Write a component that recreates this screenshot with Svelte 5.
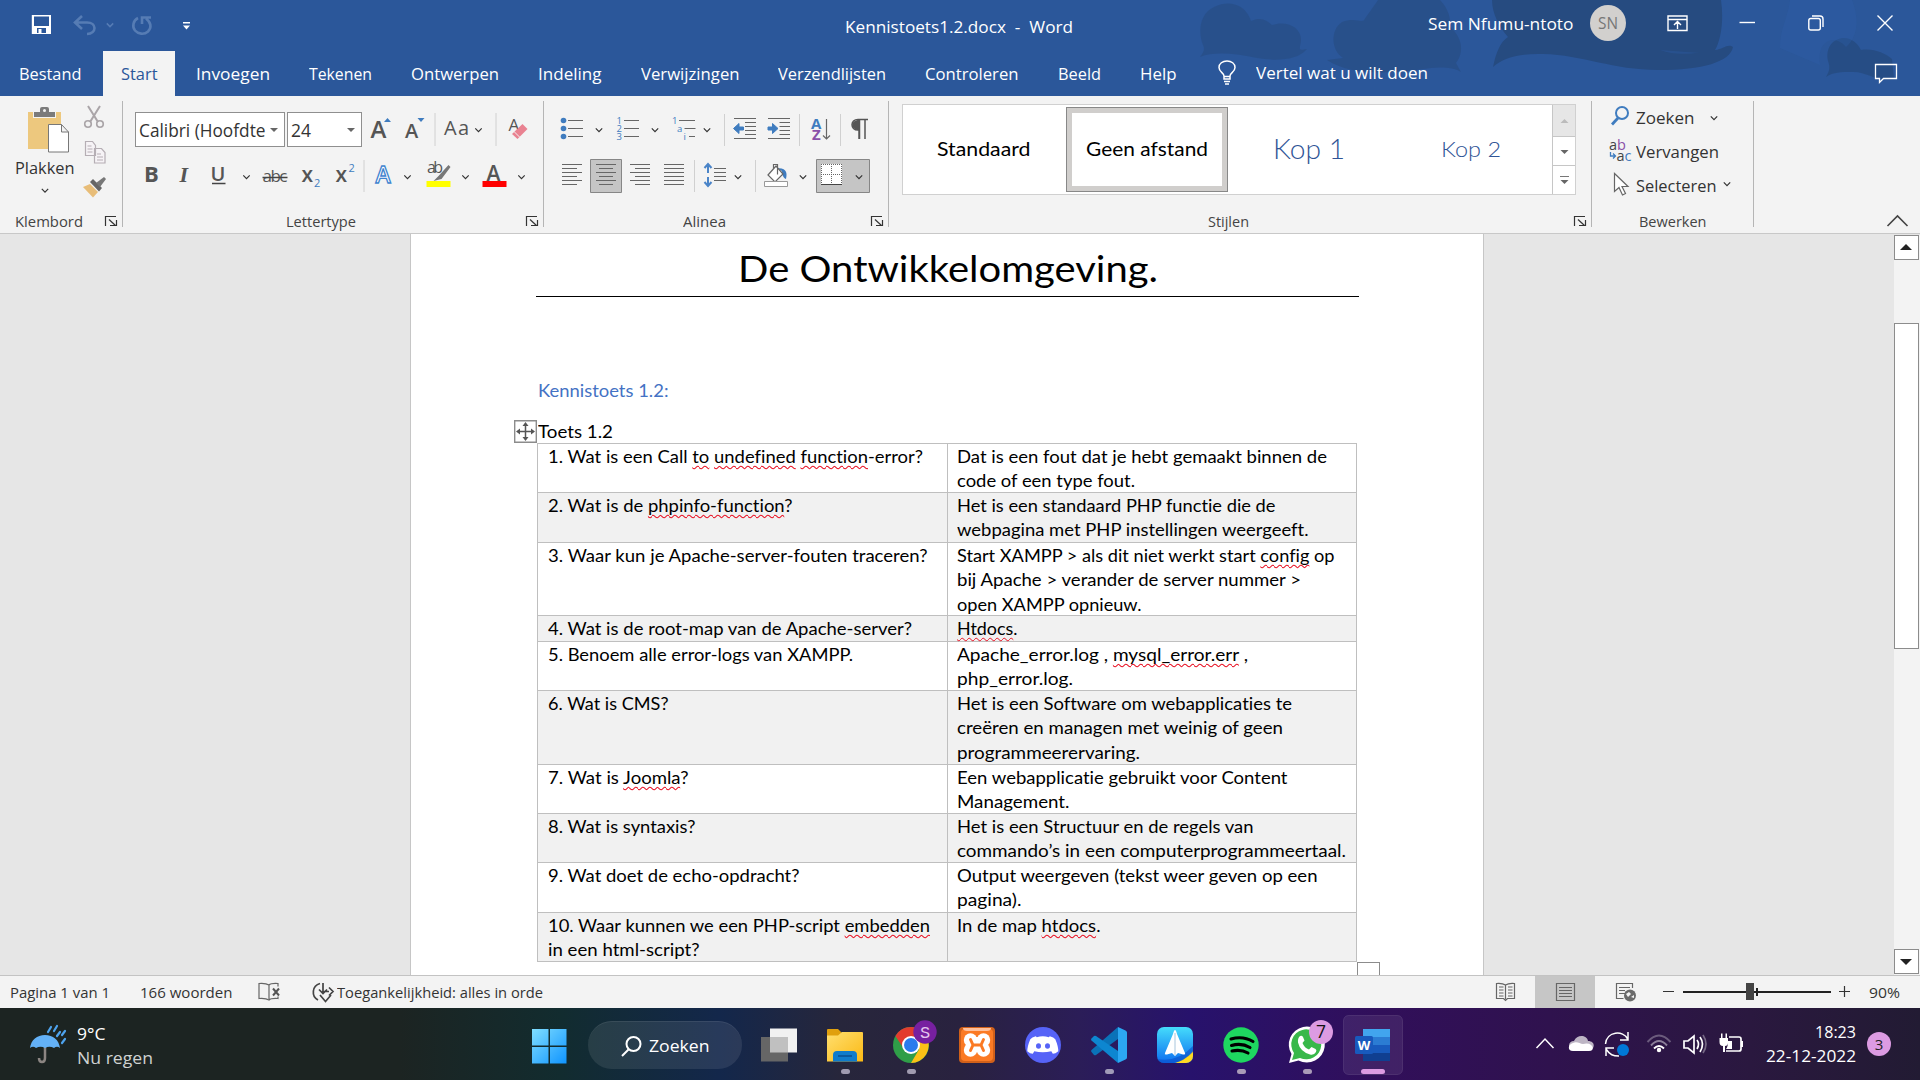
<script>
  // Scales a run of text horizontally so that it takes exactly `width` pixels.
  function fit(node, width) {
    const natural = node.getBoundingClientRect().width;
    node.style.transform = `scaleX(${width / natural})`;
    node.style.marginRight = `${width - natural}px`;
  }

  const caret = (x, y) => `M${x - 3.2} ${y - 1.6}l3.2 3.2 3.2-3.2`;
  const lines = (x1, x2, ys) => ys.map((y) => `M${x1} ${y}H${x2}`).join('');
  const six = [164.5, 168.5, 172.5, 176.5, 180.5, 184.5];
  const odd = [164.5, 172.5, 180.5];
  const even = [168.5, 176.5, 184.5];

  const tabs = [
    ['Bestand', 62.5], ['Start', 36.5], ['Invoegen', 74], ['Tekenen', 63], ['Ontwerpen', 88],
    ['Indeling', 63.5], ['Verwijzingen', 98.5], ['Verzendlijsten', 108], ['Controleren', 93.5],
    ['Beeld', 43], ['Help', 36.5]
  ];

  // Each line: [width, ...segments]; a segment wrapped in an array is a spelling error.
  const rows = [
    [49, [[375, '1. Wat is een Call ', ['to'], ' ', ['undefined'], ' ', ['function'], '-error?']],
      [[370, 'Dat is een fout dat je hebt gemaakt binnen de'], [178, 'code of een type fout.']]],
    [50, [[244.5, '2. Wat is de ', ['phpinfo-function'], '?']],
      [[318.5, 'Het is een standaard PHP functie die de'], [351.5, 'webpagina met PHP instellingen weergeeft.']]],
    [73, [[379.5, '3. Waar kun je Apache-server-fouten traceren?']],
      [[377.5, 'Start XAMPP > als dit niet werkt start ', ['config'], ' op'], [344, 'bij Apache > verander de server nummer >'], [184.5, 'open XAMPP opnieuw.']]],
    [26, [[364, '4. Wat is de root-map van de Apache-server?']], [[60.5, ['Htdocs'], '.']]],
    [49, [[305, '5. Benoem alle error-logs van XAMPP.']],
      [[291, 'Apache_error.log , ', ['mysql_error.err'], ' ,'], [116, 'php_error.log.']]],
    [74, [[120.5, '6. Wat is CMS?']],
      [[335, 'Het is een Software om webapplicaties te'], [326, 'creëren en managen met weinig of geen'], [183, 'programmeerervaring.']]],
    [49, [[140.5, '7. Wat is ', ['Joomla'], '?']],
      [[330.5, 'Een webapplicatie gebruikt voor Content'], [112.5, 'Management.']]],
    [49, [[147.5, '8. Wat is syntaxis?']],
      [[296.5, 'Het is een Structuur en de regels van'], [389, 'commando’s in een computerprogrammeertaal.']]],
    [50, [[251.5, '9. Wat doet de echo-opdracht?']],
      [[360.5, 'Output weergeven (tekst weer geven op een'], [64.5, 'pagina).']]],
    [49, [[382, '10. Waar kunnen we een PHP-script ', ['embedden']], [151.5, 'in een html-script?']],
      [[143.5, 'In de map ', ['htdocs'], '.']]]
  ];
</script>

{#snippet textLines(list)}
  <div class="cell">
    {#each list as [w, ...segs]}
      <div class="line"><span class="fit" use:fit={w}>{#each segs as s}{#if Array.isArray(s)}<span class="err">{s[0]}</span>{:else}{s}{/if}{/each}</span></div>
    {/each}
  </div>
{/snippet}

{#snippet groupLabel(text, w, launcher)}
  <div class="label">
    <span class="name"><span class="fit" use:fit={w}>{text}</span></span>
    {#if launcher}
      <svg width="24" height="20" viewBox="0 0 24 20"><path d="M7.500 15V5.500H18M18.500 9V14.500H12" class="ln dk" /><path d="M11 8.500l6.500 6" class="ln dk" /></svg>
    {/if}
  </div>
{/snippet}

<div class="screen">
  <header>
    <svg class="decor" width="780" height="96" viewBox="1140 0 780 96">
      <g fill="#264b80">
        <path opacity=".55" d="M1200 57c4-5 5-8 3-12-5-12-4-31 11-38 16-8 32-2 37 14 10-5 17 0 21 4 14-5 30 2 29 16-1 8-4 10 6 8-10 12-32 12-50 9-20-4-42-7-57-1z" />
        <path opacity=".6" d="M1327 60l16-2c-12-8-13-28-1-36 12-5 20 1 22-2 10-14 14-20 14-20h62c8 8 12 20 9 26 17 14 13 30 7 37l5 9c-8-5-20-5-30-4-40 6-80 8-104-8z" />
        <path d="M1492 0c0 14 8 28 16 37-8 5-12 16-15 30 9-8 24-14 50-13 40 1 70 16 115 16 45 0 72-8 75-23-5-4-10 2-18 3 6-10 9-30 6-50z" />
        <path opacity=".8" d="M1826 77c4-7 4-10 2-16-3-14 6-23 16-23 8 0 14 6 17 12 12-2 24 3 31 9l2 20c-18 3-28-8-42-7-12 0-18 0-26 5z" />
      </g>
      <path d="M1780 48c0-20 8-30 10-48h62c8 20 5 38-6 47-12-14-30-6-26 18M1660 50c15 6 30 3 40 3" fill="#2f5fa8" opacity=".35" />
    </svg>
    <div class="titlebar">
      <svg width="220" height="48" viewBox="0 0 220 48">
        <path d="M31.800 15h19.200v19h-19.200z" fill="#fff" /><path d="M34 16.500h15v9.500h-15zM37 28h9v5h-9z" fill="#2b579a" /><path d="M38.500 29h3v4h-3z" fill="#fff" />
        <g fill="none" stroke="#567cb4" stroke-width="2.600"><path d="M82 16l-7 6.500 7 6.500M75 22.500h12c10 0 10 11 0 11.500" /><path d="M146 18.500c5 4 6 9 2 13-4 3.500-10 2.500-13-1-3-4-2-10 3-12.500M142 24V17.500h9" /></g>
        <path d={caret(110, 25)} fill="none" stroke="#567cb4" stroke-width="1.500" />
        <path d="M183 22h7v1.500h-7zM183 25.500h7l-3.500 4z" fill="#fff" />
      </svg>
      <span class="doc"><span class="fit pre" use:fit={228}>Kennistoets1.2.docx  -  Word</span></span>
      <span class="user"><span class="fit" use:fit={145.5}>Sem Nfumu-ntoto</span></span>
      <span class="avatar"><span class="fit" use:fit={20}>SN</span></span>
      <svg width="280" height="48" viewBox="1640 0 280 48" fill="none" stroke="#fff" stroke-width="1.400">
        <path d="M1668 16h19v14.500h-19zM1668 19.500h19M1677.500 29v-7M1674 25l3.500-3.500 3.500 3.500" />
        <path d="M1739.500 22.500h15.500" /><rect x="1808.800" y="18.500" width="11.500" height="11.500" rx="2" /><path d="M1812 16h8c2 0 3 1 3 3v8" />
        <path d="M1877.500 15.500l15 15M1892.500 15.500l-15 15" />
      </svg>
    </div>
    <nav>
      {#each tabs as [name, w]}
        <span class="tab" class:active={name === 'Start'}><span class="fit" use:fit={w}>{name}</span></span>
      {/each}
      <svg class="bulb" width="24" height="45" viewBox="1216 51 24 45" fill="none" stroke="#fff" stroke-width="1.500"><path d="M1225 79v-3c0-3-5-4-5-8.500 0-4 3.500-6.500 8-6.500s8 2.500 8 6.500c0 4.500-5 5.500-5 8.500v3zM1225 81.500h6M1226 84h4M1225 76.500h6" /></svg>
      <span class="tell"><span class="fit" use:fit={172}>Vertel wat u wilt doen</span></span>
      <svg class="comment" width="24" height="45" viewBox="1874 51 24 45" fill="none" stroke="#fff" stroke-width="1.300"><path d="M1875.500 64.500h21v14h-13l-4 4v-4h-4z" /></svg>
    </nav>
  </header>

  <section class="ribbon">
    <div class="group g1">
      <div class="body clip">
        <div class="paste">
          <svg width="84" height="54" viewBox="0 101 84 54"><path d="M28 112h33v37H28z" fill="#edc87e" /><path d="M33 111h23v7H33z" fill="#f3f3f3" /><path d="M34 112h6v-3q0-2 2-2h5q2 0 2 2v3h6v5H34z" fill="#7b7b7b" /><circle cx="44.500" cy="110.500" r="1.500" fill="#f3f3f3" /><path d="M48.500 124.500h13l7 7.500v20h-20zM61.500 124.500v7.500h7" fill="#fff" stroke="#777" /></svg>
          <span class="big"><span class="fit" use:fit={59.5}>Plakken</span></span>
          <svg width="84" height="32" viewBox="0 179 84 32"><path d={caret(45, 190.500)} class="ln dk" /></svg>
        </div>
        <div class="minis">
          <svg width="34" height="34" viewBox="80 101 34 34" fill="none" stroke="#aaa5a8" stroke-width="2"><path d="M88 106l10 16M100 106l-10 16" /><circle cx="88" cy="124" r="3.300" stroke-width="1.600" /><circle cx="100" cy="124" r="3.300" stroke-width="1.600" /></svg>
          <svg width="34" height="34" viewBox="80 135 34 34" fill="#f6f3f6" stroke="#b5aeb4" stroke-width="1.200"><path d="M85.500 141.500h7l3 4v10h-10zM94.500 148.500h7l3.500 4v10.500h-10.500z" /><path d="M87.500 146h4M87.500 149h5M87.500 152h5M97 154h4M97 157h6M97 160h6" /></svg>
          <svg width="34" height="42" viewBox="80 169 34 42"><path d="M83 187l7-3 8 8-5 5.500z" fill="#e8bd78" /><path d="M90 182l3-3 9 9-3 3.500z" fill="#666" /><path d="M96 183l8-6 2 2-6 8z" fill="#777" /></svg>
        </div>
      </div>
      {@render groupLabel('Klembord', 68, true)}
    </div>

    <div class="group g2">
      <div class="row r1 fontrow">
        <span class="combo wide"><span class="fit" use:fit={126.5}>Calibri (Hoofdte</span><i></i></span>
        <span class="combo"><span class="fit" use:fit={20}>24</span><i></i></span>
        <svg width="173" height="52" viewBox="361.500 101 173 52">
          <g class="glyph"><text x="370" y="138" font-size="24" font-weight="600" textLength="17">A</text><text x="404.500" y="138" font-size="20" font-weight="600" textLength="14">A</text><text x="443.500" y="135" font-size="20" textLength="25">Aa</text><text x="508" y="131" font-size="17" textLength="11">A</text></g>
          <path d="M383.500 122h7l-3.500-4zM417 118h7l-3.500 4z" fill="#3f7cbf" />
          <path d="M434.500 113v33M495.500 113v33" class="sep" /><path d={caret(478, 130)} class="ln dk" />
          <path d="M511.500 134l5.500 5 10-10-5-5z" fill="#e98291" /><path d="M513.500 131.500l5.500 5.500" stroke="#f3f3f3" />
        </svg>
      </div>
      <div class="row r2">
        <svg width="420" height="58" viewBox="122.500 153 420 58">
          <g class="glyph"><text x="143.500" y="182" font-size="22" font-weight="700" textLength="14">B</text><text x="179" y="182" font-size="22" class="serif" font-weight="600">I</text><text x="210" y="181" font-size="20" font-weight="600" textLength="16">U</text><text x="262" y="182" font-size="17" textLength="25">abc</text><text x="301" y="181.500" font-size="21" font-weight="600">x</text><text x="335" y="181.500" font-size="21" font-weight="600">x</text><text x="426.500" y="173" font-size="16" textLength="16">ab</text><text x="486" y="181" font-size="21" font-weight="600" textLength="15">A</text></g>
          <path d="M211.500 183.500h13.500M262 177.500h25" stroke="#444" stroke-width="1.300" />
          <g fill="#3f7cbf" class="sans"><text x="313.500" y="187" font-size="11">2</text><text x="348" y="172" font-size="11">2</text></g>
          <text x="375" y="183" font-size="23" font-weight="600" class="sans" fill="#fff" stroke="#3f84cf" stroke-width="1.300">A</text>
          <path d="M363.500 160v32" class="sep" />
          <path d={[caret(246, 177), caret(407, 177), caret(465, 177), caret(521, 177)].join('')} class="ln dk" />
          <path d="M448 165l-10 11-5 5 8-2 9-12z" fill="#777" /><path d="M426 181h24v6h-24z" fill="#ff0" /><path d="M482 181h24v6h-24z" fill="red" />
        </svg>
      </div>
      {@render groupLabel('Lettertype', 70, true)}
    </div>

    <div class="group g3">
      <div class="row r1">
        <svg width="344" height="52" viewBox="544 101 344 52">
          <g fill="#3f7cbf"><circle cx="563.500" cy="120.500" r="2.800" /><circle cx="563.500" cy="128.500" r="2.800" /><circle cx="563.500" cy="136.500" r="2.800" />
            <g font-size="9.500" class="sans"><text x="616.500" y="124">1</text><text x="616.500" y="132">2</text><text x="616.500" y="140">3</text><text x="672" y="124">1</text><text x="677" y="132">a</text><text x="683.500" y="140">i</text></g>
            <path d="M733.500 128.500l5.500-5v3.500h4.500v3h-4.500v3.500zM778 128.500l-5.500-5v3.500h-4.500v3h4.500v3.500z" stroke="#3f7cbf" />
          </g>
          <path d={lines(568, 583, [120.5, 128.5, 136.5]) + lines(624, 639, [120.5, 128.5, 136.5]) + 'M679 120.500h16M684.500 128.500h11M689 136.500h6' + lines(734, 756, [118.5, 138.5]) + lines(745, 756, [122.5, 126.5, 130.5, 134.5]) + lines(768, 790, [118.5, 138.5]) + lines(779.5, 790, [122.5, 126.5, 130.5, 134.5])} class="ln" />
          <path d={[caret(599, 130), caret(655, 130), caret(707, 130)].join('')} class="ln dk" />
          <path d="M724.500 114v32M799.500 114v32M840.500 114v32" class="sep" />
          <g class="sans" font-weight="700" font-size="15"><text x="811" y="129" fill="#3f7cbf">A</text><text x="812" y="140" fill="#8a50a8">Z</text></g>
          <path d="M826.500 119v20M823 135.500l3.500 3.500 3.500-3.500" class="ln" stroke-width="1.500" />
          <path d="M868 119.500h-10c-8 0-8 10.500 0 10.500h1v9M865 119.500v19.500M859.500 119.500v19.500" fill="none" stroke="#555" stroke-width="1.500" /><path d="M859 120v10c-9 0-9-10 0-10z" fill="#555" />
        </svg>
      </div>
      <div class="row r2">
        <svg width="344" height="58" viewBox="544 153 344 58">
          <path d="M590.500 159.500h31v33h-31zM816.500 159.500h53v33h-53z" fill="#c5c5c5" stroke="#868686" />
          <path d={lines(562, 582, odd) + lines(562, 577, even) + lines(596, 616, odd) + lines(599, 613, even) + lines(630, 650, odd) + lines(635, 650, even) + lines(664, 684, six) + lines(714, 726, [168.5, 172.5, 176.5, 180.5])} class="ln" />
          <path d="M694.500 160v32M755.500 160v32" class="sep" />
          <path d="M704.500 168l3.500-4 3.500 4M708 165v8M704.500 182l3.500 4 3.500-4M708 177v8" fill="none" stroke="#4a84c8" stroke-width="2" />
          <path d="M776 168c9 0 12 3 10 11-3-1-4-5-4-8z" fill="#3f7cbf" /><path d="M768 175l8-9 7 8-8 8zM773.500 169v-4.500h4v10" fill="#fff" stroke="#666" stroke-width="1.200" /><path d="M764.500 181.500h23v5h-23z" fill="#fff" stroke="#999" />
          <path d="M821 164h21v21h-21z" fill="#fff" /><path d="M821 164.500h21M821 174.500h21M821.500 164v20M831.500 164v20M841.500 164v20" stroke="#666" stroke-dasharray="1 1" /><path d="M821 184.500h21" stroke="#444" />
          <path d={[caret(738, 177), caret(803, 177), caret(859, 177)].join('')} class="ln dk" />
        </svg>
      </div>
      {@render groupLabel('Alinea', 43, true)}
    </div>

    <div class="group g4">
      <div class="body">
        <div class="gallery">
          <span class="style"><span class="fit" use:fit={93.5}>Standaard</span></span>
          <span class="style sel"><span class="fit" use:fit={122}>Geen afstand</span></span>
          <span class="style k1"><span class="fit" use:fit={72}>Kop 1</span></span>
          <span class="style k2"><span class="fit" use:fit={60}>Kop 2</span></span>
          <span class="spin"><b class="off"><svg width="22" height="30" viewBox="0 0 22 30"><path d="M7.500 18h8l-4-4z" fill="#bbb" /></svg></b><b><svg width="22" height="28" viewBox="0 0 22 28"><path d="M7.500 13h8l-4 4z" fill="#666" /></svg></b><b><svg width="22" height="28" viewBox="0 0 22 28"><path d="M7 10.500h9" stroke="#777" /><path d="M7.500 14h8l-4 4z" fill="#666" /></svg></b></span>
        </div>
      </div>
      {@render groupLabel('Stijlen', 41, true)}
    </div>

    <div class="group g5">
      <div class="body edit">
        <div><svg width="44" height="34" viewBox="1592 101 44 34"><circle cx="1622" cy="113" r="6" fill="none" stroke="#3f7cbf" stroke-width="2" /><path d="M1618 118l-6 6.500" stroke="#3f7cbf" stroke-width="2.800" /></svg><span class="fit" use:fit={58.5}>Zoeken</span><svg class="c1" width="20" height="34" viewBox="0 0 20 34"><path d={caret(10, 17)} class="ln dk" /></svg></div>
        <div><svg width="44" height="34" viewBox="1592 135 44 34"><g class="sans" font-size="14.500" fill="#444"><text x="1609" y="149.500">a<tspan fill="#8a50a8">b</tspan></text><text x="1616.500" y="160.500">a<tspan fill="#3f7cbf">c</tspan></text></g><path d="M1610.500 152v4h5M1613 153.500l2.500 2.500-2.500 2.500" fill="none" stroke="#3f7cbf" stroke-width="1.300" /></svg><span class="fit" use:fit={83}>Vervangen</span></div>
        <div><svg width="44" height="34" viewBox="1592 169 44 34"><path d="M1614.500 173.500v18l4.500-4 3.500 7.500 3-1.500-3.500-7h6z" fill="#fff" stroke="#666" stroke-width="1.200" /></svg><span class="fit" use:fit={80.5}>Selecteren</span><svg class="c2" width="20" height="34" viewBox="0 0 20 34"><path d={caret(10, 15)} class="ln dk" /></svg></div>
      </div>
      {@render groupLabel('Bewerken', 67.5, false)}
    </div>
    <svg class="collapse" width="30" height="20" viewBox="1882 211 30 20"><path d="M1887.500 226l10-10 10 10" fill="none" stroke="#444" stroke-width="1.600" /></svg>
  </section>

  <main>
    <article>
      <h1><span class="fit" use:fit={420}>De Ontwikkelomgeving.</span></h1>
      <h2><span class="fit" use:fit={130.5}>Kennistoets 1.2:</span></h2>
      <p><span class="fit" use:fit={75}>Toets 1.2</span>
        <svg class="move" width="23" height="23" viewBox="0 0 23 23"><path d="M.7.700h21.600v21.600H.7z" fill="#fff" stroke="#8c8c8c" stroke-width="1.400" /><path d="M11.500 4v15M4 11.500h15" stroke="#555" stroke-width="1.500" /><path d="M11.500 2l-3 4h6zM11.500 21l-3-4h6zM2 11.500l4-3v6zM21 11.500l-4-3v6z" fill="#555" /></svg>
      </p>
      <div class="table">
        {#each rows as [h, q, a], i}
          <div class="trow" class:alt={i % 2} style:height="{h}px">
            {@render textLines(q)}
            {@render textLines(a)}
          </div>
        {/each}
      </div>
      <span class="resize"></span>
    </article>
    <aside>
      <b><svg width="25" height="24" viewBox="0 0 25 24"><path d="M6 14h12l-6-6z" fill="#222" /></svg></b>
      <span class="thumb"></span>
      <b><svg width="25" height="24" viewBox="0 0 25 24"><path d="M6 9h12l-6 6z" fill="#222" /></svg></b>
    </aside>
  </main>

  <footer>
    <span class="st s1"><span class="fit" use:fit={100}>Pagina 1 van 1</span></span>
    <span class="st s2"><span class="fit" use:fit={92.5}>166 woorden</span></span>
    <svg width="105" height="32" viewBox="232 976 105 32"><path d="M269 999V985q-3-2-10-1.500v15q7-.5 10 1.500q2-2 9-1.500v-2M269 985q2-2 9-1.500v3" fill="none" stroke="#666" stroke-width="1.200" /><path d="M273 988.500l6 7M279 988.500l-6 7" stroke="#555" stroke-width="2" />
      <path d="M320 983.500c-8 2-9 13-2 16.500M323 983v10M319 989.500l4 4 4-4M324 991.500h5M329 987.500l4 4-4 4M320 995l5.500 6.500 5.500-6.500" fill="none" stroke="#444" stroke-width="1.700" /></svg>
    <span class="st"><span class="fit" use:fit={206}>Toegankelijkheid: alles in orde</span></span>
    <svg class="views" width="385" height="32" viewBox="1480 976 385 32">
      <path d="M1535 976h60v32h-60z" fill="#c6c6c6" />
      <g fill="none" stroke="#666" stroke-width="1.200"><path d="M1505.500 985q-3-2-9-1.500v15h7l2 2 2-2h7v-15q-6-.5-9 1.500v14" /><path d={lines(1499, 1503.5, [987, 990, 993, 996]) + lines(1508, 1512.5, [987, 990, 993, 996])} /><path d={'M1556.500 983.500h18v17h-18z' + lines(1559, 1572, [987.5, 990.5, 993.5, 996.5])} /><path d={'M1632.500 988v-4.500h-16v15h7' + lines(1619, 1630, [987.5]) + lines(1619, 1625, [990.5, 993.5])} /></g>
      <circle cx="1630" cy="995.500" r="6" fill="#6b6b6b" /><path d="M1626 994l3-2 2 2-3 3zM1631 997l3-2v3z" fill="#f3f3f3" />
      <path d="M1663 991.500h11M1839 991.500h11M1844.500 986v11" stroke="#333" stroke-width="1.200" /><path d="M1683 991h148v2h-148z" fill="#222" /><path d="M1746 983h8v17h-8z" fill="#444" /><path d="M1756 988h2v8h-2z" fill="#222" />
    </svg>
    <span class="st pct"><span class="fit" use:fit={31}>90%</span></span>
  </footer>

  <div class="taskbar">
    <svg width="77" height="72" viewBox="0 1008 77 72"><path d="M45 1045v13q0 4-3 4t-3-4" fill="none" stroke="#8b8582" stroke-width="2.500" /><path d="M30 1048c1-8 7-13 15-13s14 5 15 13q-3-2.500-6 0-4.500-2.500-9 0-4.500-2.500-9 0-3-2.500-6 0z" fill="#63b1f7" /><path d="M48 1032l3-5M54 1031l3-5M57 1036l3-4M62 1035l3-4M62 1043l3-4" stroke="#4ea3ee" stroke-width="2.200" stroke-linecap="round" /></svg>
    <div class="weather"><span><span class="fit" use:fit={28.500}>9°C</span></span><span class="sub"><span class="fit" use:fit={76}>Nu regen</span></span></div>
    <svg class="win" width="36" height="72" viewBox="532 1008 36 72"><defs><linearGradient id="w" x1="0" y1="0" x2="1" y2="1"><stop offset="0" stop-color="#80deff" /><stop offset="1" stop-color="#0f94ff" /></linearGradient></defs><path d="M532 1029h16.500v16.500H532zM550 1029h16.500v16.500H550zM532 1047h16.500v16.500H532zM550 1047h16.500v16.500H550z" fill="url(#w)" /></svg>
    <div class="search"><svg width="31" height="48" viewBox="618 1021 31 48"><circle cx="633.500" cy="1043" r="7" fill="none" stroke="#fff" stroke-width="2" /><path d="M628.500 1048.500l-6.500 6.500" stroke="#fff" stroke-width="2" /></svg><span class="fit" use:fit={60.5}>Zoeken</span></div>

    <svg width="66" height="72" viewBox="746 1008 66 72"><path d="M770 1028.500h27v24h-27z" fill="#f1f1f1" /><path d="M761 1037h27v24.500h-27z" fill="#666" /><path d="M770 1037h18v15.500h-18z" fill="#c0c0c0" /></svg>
    <svg width="66" height="72" viewBox="812 1008 66 72"><defs><linearGradient id="f" x1="0" y1="0" x2="1" y2="1"><stop offset="0" stop-color="#ffdf70" /><stop offset="1" stop-color="#fbb914" /></linearGradient></defs><path d="M827 1030q0-1 1-1h10l4 4v5h-15z" fill="#e0a00e" /><path d="M827 1035.500h11l4-3.500h20q1 0 1 1v28.500h-36z" fill="url(#f)" /><path d="M833 1061.500v-6.500q0-4 4-4h16q4 0 4 4v6.500z" fill="#0f7ccb" /><path d="M838 1056h14" stroke="#0a4f8f" stroke-width="1.500" /><rect x="841" y="1069" width="9" height="5" rx="2.500" fill="#a09bb0" /></svg>
    <svg width="66" height="72" viewBox="878 1008 66 72"><circle cx="911" cy="1045" r="18" fill="#2f9e48" /><path d="M895.400 1036A18 18 0 0 1 926.600 1036L911 1037 904 1049z" fill="#e33b2e" /><path d="M911 1037h15.900a18 18 0 0 1-15.900 26l8-13.500z" fill="#fbc116" /><circle cx="911" cy="1045" r="9" fill="#fff" /><circle cx="911" cy="1045" r="7" fill="#2a7bee" /><circle cx="925" cy="1032" r="11.700" fill="#7720a0" /><text x="925" y="1037.500" font-size="15" text-anchor="middle" fill="#e3c4ee" class="mono">S</text><rect x="907" y="1069" width="9" height="5" rx="2.500" fill="#a09bb0" /></svg>
    <svg width="66" height="72" viewBox="944 1008 66 72"><rect x="959" y="1027" width="36" height="36" rx="4" fill="#d0601a" /><rect x="961" y="1029" width="32" height="32" rx="4" fill="#fb7a24" /><path d="M963 1028h28q0 3-4 3h-20q-4 0-4-3z" fill="#ffc09a" /><g fill="#fff"><circle cx="970.500" cy="1040" r="6.700" /><circle cx="983.500" cy="1040" r="6.700" /><circle cx="970.500" cy="1050" r="6.700" /><circle cx="983.500" cy="1050" r="6.700" /><path d="M970 1037h14v15h-14z" /></g><path d="M970.500 1039.500l2.500 5.500-2.500 5.500M983.500 1039.500l-2.500 5.500 2.500 5.500M973 1045h8" fill="none" stroke="#fb7a24" stroke-width="3" stroke-linecap="round" stroke-linejoin="round" /></svg>
    <svg width="66" height="72" viewBox="1010 1008 66 72"><circle cx="1043" cy="1045" r="18" fill="#5663f7" /><path d="M1037 1037q6-2 12 0l1-1q4 1 5.500 3 3 7 3 12-3 2.500-5.500 2.500l-1.500-2.500q-8.500 2-17 0l-1.500 2.500q-2.500 0-5.500-2.500 0-5 3-12 1.500-2 5.500-3z" transform="translate(-.2 .3)" fill="#fff" /><ellipse cx="1038.500" cy="1046" rx="2.500" ry="2.800" fill="#5663f7" /><ellipse cx="1047.500" cy="1046" rx="2.500" ry="2.800" fill="#5663f7" /></svg>
    <svg width="66" height="72" viewBox="1076 1008 66 72"><path d="M1118 1027v12l-22 16q-1 .5-2 0l-2.500-3q-1-1 0-2z" fill="#0a72b8" /><path d="M1118 1063v-12l-22-15q-1-.5-2 0l-2.500 2.500q-1 1 0 2z" fill="#0d86d0" /><path d="M1118 1027l7.500 3.500q1.500 1 1.500 2v25q0 1.500-1.500 2L1118 1063z" fill="#2ca7f2" /><rect x="1105" y="1069" width="9" height="5" rx="2.500" fill="#a09bb8" /></svg>
    <svg width="66" height="72" viewBox="1142 1008 66 72"><defs><linearGradient id="s" x1="0" y1="0" x2="0" y2="1"><stop offset="0" stop-color="#45dcfb" /><stop offset="1" stop-color="#0c6ff0" /></linearGradient><clipPath id="sc"><rect x="1157" y="1027" width="36" height="36" rx="7" /></clipPath></defs><g clip-path="url(#sc)"><path d="M1157 1027h36v36h-36z" fill="url(#s)" /><path d="M1175 1063q10-3 18-12v12z" fill="#ffda22" /><path d="M1157 1059q20 4 36-13v6q-12 13-28 11h-8z" fill="#0a4fc8" opacity=".6" /></g><path d="M1175 1030q1 0 2 4l8 19q1 2-2 1.500l-5-1.500-3 3-3-3-5 1.500q-3 .5-2-1.500l8-19q1-4 2-4z" fill="#fff" /><path d="M1175 1033v22" stroke="#a9c6dc" /></svg>
    <svg width="66" height="72" viewBox="1208 1008 66 72"><circle cx="1241" cy="1045" r="17.700" fill="#1ed760" /><path d="M1231 1039q12-3.500 22 2.500M1231.500 1045.500q10-3 18.500 2M1232 1051q9-2 16 2" fill="none" stroke="#000" stroke-width="3.100" stroke-linecap="round" /><rect x="1237" y="1069" width="9" height="5" rx="2.500" fill="#a99bb8" /></svg>
    <svg width="66" height="72" viewBox="1274 1008 66 72"><path d="M1289 1063l2.500-9a18 18 0 1 1 7 6.500z" fill="#fff" /><path d="M1292 1060l2-7a15 15 0 1 1 6 5z" fill="#38b84a" /><path d="M1300 1036q2-1 3 1l1.500 3.500-2 2.500q2 5 6.500 6.500l2.500-2.500 4 2q1.500 1 .5 3-2 3.500-6 2.500-10-3-12-12-.5-4.500 2-6.500z" fill="#fff" /><circle cx="1321" cy="1032" r="12" fill="#dc9be2" /><text x="1321" y="1038" font-size="17.500" text-anchor="middle" class="sans" fill="#111">7</text><rect x="1303" y="1069" width="9" height="5" rx="2.500" fill="#a99bb8" /></svg>
    <svg width="66" height="72" viewBox="1340 1008 66 72"><rect x="1343.500" y="1015.500" width="59" height="59" rx="5" fill="#fff" fill-opacity=".08" stroke="#fff" stroke-opacity=".1" /><path d="M1363 1029h27v8h-27z" fill="#41a5ee" /><path d="M1363 1037h27v8h-27z" fill="#2b7cd3" /><path d="M1363 1045h27v8h-27z" fill="#185abd" /><path d="M1363 1053h27v8h-27z" fill="#103f91" /><rect x="1355" y="1036" width="18" height="18" rx="1.500" fill="#185abd" /><text x="1364" y="1049.500" font-size="13" font-weight="700" text-anchor="middle" fill="#fff" class="sans">W</text><rect x="1361" y="1069" width="24" height="5" rx="2.500" fill="#dc9be2" /></svg>

    <svg class="tray" width="230" height="72" viewBox="1530 1008 230 72">
      <g fill="none" stroke="#fff" stroke-width="1.500"><path d="M1536.500 1048l8.500-9 8.500 9" /><path d="M1605.500 1044c1-13 18-14 22-5M1628 1032v8h-8M1606 1056v-8h8M1606 1049c4 6 7 7 13 7" /></g>
      <path d="M1573 1050c-6-1-5-9 1-9 3-7 13-6 14 0 8 0 7 9 1 9z" fill="#bdb5c4" /><path d="M1573 1051c-6 0-5-7 0-8 4-2 7 1 10 1 10-3 13 7 6 7z" fill="#fff" />
      <circle cx="1623" cy="1050" r="6" fill="#0078d7" />
      <g fill="none" stroke-width="1.900" stroke="#fff"><path d="M1647.500 1042q11.500-13 23 0" opacity=".3" /><path d="M1651 1045.500q8-9 16 0" opacity=".45" /><path d="M1654 1048.500q5-5 10 0" /></g><circle cx="1659" cy="1050" r="2.200" fill="#fff" />
      <g fill="none" stroke="#fff" stroke-width="1.700"><path d="M1684 1041h4l6-5v17l-6-5h-4zM1697 1040q3 4 0 9M1700 1037q5 7 0 15" /><path d="M1703 1035q6 9 0 18" opacity=".35" /><path d="M1729 1037h10q2 0 2 2v10q0 2-2 2h-13" /></g><path d="M1741 1041h2v6h-2zM1719.500 1038h8.500v4q0 4-3 4v6h-2v-6q-3.500 0-3.500-4zM1721 1033.500h1.500v4.500h-1.500zM1725.500 1033.500h1.500v4.500h-1.500zM1728 1041h4v8h-6q2-2 2-8z" fill="#fff" />
    </svg>
    <div class="clock"><span><span class="fit r" use:fit={41}>18:23</span></span><span><span class="fit r" use:fit={90}>22-12-2022</span></span></div>
    <span class="notif">3</span>
  </div>
</div>

<style>
  :global(body) { margin: 0; overflow: hidden; }
  .screen { width: 1920px; height: 1080px; display: flex; flex-direction: column; font: 17px 'Open Sans', sans-serif; color: #444; overflow: hidden; }
  svg { display: block; flex: none; }
  svg text { font-family: 'Open Sans', sans-serif; }
  svg text.serif { font-family: 'Liberation Serif', serif; font-style: italic; }
  svg text.mono { font-family: 'Liberation Mono', monospace; font-size: 17px; }
  .fit { display: inline-block; white-space: nowrap; transform-origin: 0 50%; flex: none; }
  .pre { white-space: pre; }
  .glyph { fill: #555; }
  .ln { fill: none; stroke: #666; stroke-width: 1.2; }
  .ln.dk { stroke: #333; }
  .sep { fill: none; stroke: #d0d0d0; }

  header { position: relative; height: 96px; background: #2b579a; color: #fff; flex: none; }
  .decor { position: absolute; right: 0; top: 0; }
  .titlebar { position: relative; display: flex; height: 51px; line-height: 53px; }
  .titlebar svg { height: 48px; }
  .doc { width: 583.5px; padding-left: 624.5px; }
  .user { width: 162px; line-height: 48px; }
  .avatar { width: 36px; height: 36px; margin: 5px 14px 0 0; border-radius: 50%; background: #d2d0ce; color: #777; font-size: 16px; line-height: 36px; display: flex; justify-content: center; }
  nav { position: relative; display: flex; height: 45px; line-height: 45px; }
  .tab { padding: 0 19.5px; }
  .tab:first-child { padding-left: 18.7px; margin-right: 2px; }
  .tab.active { background: #f3f3f3; color: #2b579a; padding: 0 18px; margin-right: 1.5px; }
  .bulb { margin-left: 19.5px; }
  .tell { margin-left: 16.5px; line-height: 43px; }
  .comment { margin: 0 22px 0 auto; }

  .ribbon { display: flex; height: 132px; padding-top: 5px; background: #f3f3f3; border-bottom: 1px solid #c8c8c8; flex: none; }
  .group { height: 126px; box-sizing: border-box; border-right: 1px solid #b5b5b5; display: flex; flex-direction: column; flex: none; }
  .g1 { width: 123px; }
  .g2 { width: 421px; }
  .g3 { width: 345px; }
  .g4 { width: 703px; }
  .g5 { width: 162px; }
  .body { height: 110px; flex: none; display: flow-root; }
  .r1 { height: 52px; display: flex; flex: none; }
  .r2 { height: 58px; flex: none; }
  .label { display: flex; height: 20px; line-height: 20px; font-size: 15px; flex: none; }
  .name { flex: 1; text-align: center; }
  .body.clip { display: flex; }
  .paste { width: 80px; }
  .big { display: block; padding-left: 15px; line-height: 25px; height: 24px; color: #333; }
  .fontrow { padding-left: 12px; }
  .combo { box-sizing: border-box; width: 75px; height: 35px; margin-top: 11px; border: 1px solid #8f8f8f; background: #fff; display: flex; align-items: center; padding: 0 6px 0 2.5px; font-size: 18px; color: #333; justify-content: space-between; }
  .combo.wide { width: 150px; margin-right: 2px; }
  .combo i { border: 4px solid transparent; border-top-color: #666; border-bottom: 0; }
  .gallery { box-sizing: border-box; display: flex; width: 674px; height: 91px; margin: 3px 0 0 13px; border: 1px solid #d0d0d0; background: #fff; font-family: Lato, sans-serif; font-size: 18.5px; color: #000; }
  .style { width: 162px; box-sizing: border-box; line-height: 89px; text-align: center; }
  .style.sel { margin: 2px 0 0 1px; height: 85px; line-height: 73px; border: 1px solid #888; box-shadow: inset 0 0 0 5px #d0cecc; padding-top: 5px; }
  .style.k1, .style.k2 { font-weight: 300; color: #2f5496; font-size: 27.5px; line-height: 87px; }
  .style.k2 { font-size: 22px; }
  .spin { margin-left: auto; width: 22px; border-left: 1px solid #c6c6c6; display: flex; flex-direction: column; }
  .spin b + b { border-top: 1px solid #c6c6c6; }
  .spin .off { background: #e6e6e6; height: 31px; }
  .edit { line-height: 34px; color: #333; }
  .edit div { display: flex; height: 34px; }
  .c1 { margin-left: 9.5px; }
  .c2 { margin-left: .5px; }
  .collapse { margin: 110px 8px 0 auto; }

  main { display: flex; height: 741px; background: #e6e6e6; border-bottom: 1px solid #c3c3c3; overflow: hidden; flex: none; }
  article { position: relative; box-sizing: border-box; width: 1074px; margin-left: 410px; padding-left: 126px; background: #fff; border: solid #c6c6c6; border-width: 0 1px; font-family: Lato, sans-serif; font-size: 18px; color: #000; font-variant-ligatures: none; }
  h1 { width: 823px; height: 62px; margin: 0 0 0 -1px; border-bottom: 1px solid #000; text-align: center; font: 36px/69px Lato, sans-serif; font-variant-ligatures: none; }
  h2 { margin: 81px 0 17px .5px; font: 18px/24px Lato, sans-serif; color: #4472c4; }
  p { position: relative; margin: 0 0 0 .5px; line-height: 24px; height: 24px; }
  .move { position: absolute; left: -23.5px; top: 1px; }
  .table { width: 819px; border-right: 1px solid #bfbfbf; border-bottom: 1px solid #bfbfbf; }
  .trow { display: grid; grid-template-columns: 410px 409px; box-sizing: border-box; border-top: 1px solid #bfbfbf; }
  .trow.alt { background: #f1f1f1; }
  .cell { border-left: 1px solid #bfbfbf; padding-left: 10px; box-sizing: border-box; }
  .cell + .cell { padding-left: 9px; }
  .line { line-height: 24.4px; height: 24.4px; }
  .err { text-decoration: underline wavy #e81123 1.3px; text-underline-offset: 2px; text-decoration-skip-ink: none; }
  .resize { display: block; margin-left: 820px; width: 21px; height: 21px; border: 1px solid #8c8c8c; }
  aside { margin: 1px 0 0 auto; width: 26px; background: #f3f3f3; display: flex; flex-direction: column; }
  aside b { box-sizing: border-box; width: 25px; height: 25px; border: 1px solid #8c8c8c; background: #fff; }
  aside b svg { margin-left: -1px; }
  aside b:last-child { margin-top: auto; margin-bottom: 1px; }
  .thumb { box-sizing: border-box; width: 25px; height: 326px; margin-top: 63px; border: 1px solid #8c8c8c; background: #fff; }

  footer { display: flex; height: 32px; background: #f3f3f3; font-size: 15.3px; line-height: 32px; color: #333; flex: none; }
  .s1 { padding-left: 9.5px; width: 130px; }
  .s2 { width: 92.5px; }
  .views { margin-left: auto; }
  .pct { width: 51px; padding-left: 4px; }

  .taskbar { display: flex; height: 73px; color: #fff; flex: none; background: linear-gradient(90deg, #1c2422 0, #1c2422 400px, #122c2f 560px, #13274b 720px, #27263b 840px, #29223f 960px, #2b1d58 1080px, #27126c 1190px, #310f5a 1380px, #2f124e 1550px, #2a183f 1750px, #221b33 1920px); }
  .weather { width: 455px; display: flex; flex-direction: column; padding-top: 13.5px; line-height: 24.5px; }
  .weather .sub { color: #cfd2d1; }
  .search { box-sizing: border-box; width: 154px; height: 48px; margin: 13px 4px 0 20px; padding-left: 30px; border-radius: 24px; background: rgba(255, 255, 255, .09); border-top: 1px solid rgba(255, 255, 255, .08); display: flex; line-height: 48px; }
  .tray { margin-left: 124px; }
  .clock { width: 96px; display: flex; flex-direction: column; align-items: flex-end; padding-top: 12px; line-height: 23.5px; }
  .notif { width: 24px; height: 24px; margin: 24px 0 0 11px; border-radius: 50%; background: #dc9be2; color: #222; font-size: 15px; line-height: 24px; text-align: center; }
</style>
